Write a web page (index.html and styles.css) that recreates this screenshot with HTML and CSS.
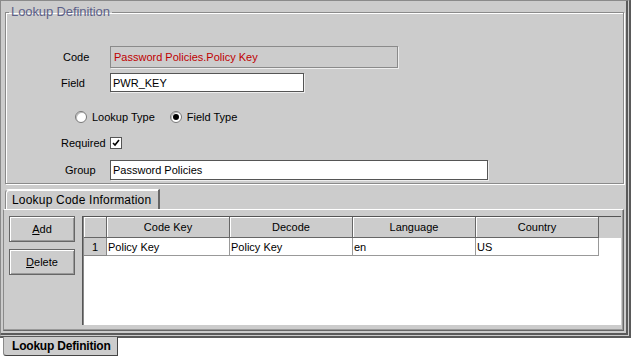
FILE: index.html
```html
<!DOCTYPE html>
<html lang="en">
<head>
  <meta charset="UTF-8">
  <title>Lookup Definition</title>
  <link rel="stylesheet" href="styles.css">
</head>
<body>
  <div class="frame">
    <fieldset class="def">
      <legend>Lookup Definition</legend>
      <div class="row r-code">
        <label class="lbl lbl-code">Code</label>
        <div class="input ro w-code">Password Policies.Policy Key</div>
      </div>
      <div class="row r-field">
        <label class="lbl">Field</label>
        <div class="input w-field">PWR_KEY</div>
      </div>
      <div class="row r-radio">
        <span class="opt"><span class="radio"></span>Lookup Type</span>
        <span class="opt"><span class="radio on"></span>Field Type</span>
      </div>
      <div class="row r-req">
        <label class="lbl">Required</label>
        <span class="check">
          <svg width="8" height="8" viewBox="0 0 8 8"><path d="M1 4 L3 6 L7 1" fill="none" stroke="#000" stroke-width="1.6"/></svg>
        </span>
      </div>
      <div class="row r-group">
        <label class="lbl lbl-group">Group</label>
        <div class="input w-group">Password Policies</div>
      </div>
    </fieldset>

    <div class="tabs">
      <div class="tab">Lookup Code Information</div>
    </div>
    <div class="panel">
      <div class="buttons">
        <button class="btn"><u>A</u>dd</button>
        <button class="btn"><u>D</u>elete</button>
      </div>
      <div class="grid">
        <table>
          <colgroup>
            <col class="c-num"><col class="c-data"><col class="c-data"><col class="c-data"><col class="c-data"><col>
          </colgroup>
          <thead>
            <tr>
              <th></th>
              <th>Code Key</th>
              <th>Decode</th>
              <th>Language</th>
              <th>Country</th>
              <th class="filler"></th>
            </tr>
          </thead>
          <tbody>
            <tr>
              <td class="num">1</td>
              <td>Policy Key</td>
              <td>Policy Key</td>
              <td>en</td>
              <td>US</td>
              <td class="filler"></td>
            </tr>
          </tbody>
        </table>
      </div>
    </div>
  </div>
  <div class="bottom-tab">Lookup Definition</div>
</body>
</html>
```

FILE: styles.css
```css
body { margin: 0; background: #fff; font-family: "Liberation Sans", Arial, sans-serif; font-size: 11px; color: #000; }

.frame { width: 631px; height: 338px; box-sizing: border-box; background: #cccccc; border-top: 1px solid #8a8a8a; border-left: 1px solid #8a8a8a; border-right: 5px double #5a5a5a; border-bottom: 5px double #5a5a5a; display: flex; flex-direction: column; }

.def { margin: 3px 2px 0 4px; padding: 0 0 3px 0; border: 1px solid #8a8a8a; box-shadow: inset 1px 1px #fff, 1px 1px #fff; min-width: 0; }
.def legend { font-size: 13px; color: #5c6088; padding: 0 2px; margin-left: 3px; line-height: 16px; letter-spacing: -0.1px; }

.row { display: flex; align-items: center; }
.lbl { width: 49px; margin-left: 55px; }
.lbl-code { margin-left: 57px; width: 47px; }
.lbl-group { margin-left: 59px; width: 45px; }

.r-code { margin-top: 26px; height: 22px; }
.r-field { margin-top: 5px; height: 19px; }
.r-radio { margin-top: 16px; height: 17px; padding-left: 69px; gap: 15px; }
.r-req { margin-top: 10px; height: 16px; }
.r-group { margin-top: 9px; height: 20px; }

.input { box-sizing: border-box; height: 100%; background: #fff; border: 1px solid #555; box-shadow: 1px 1px #eee; padding-left: 2px; display: flex; align-items: center; }
.ro { background: #cccccc; color: #c00000; border-color: #8a8a8a; padding-left: 3px; }
.w-code { width: 288px; }
.w-field { width: 194px; }
.w-group { width: 378px; }

.opt { display: flex; align-items: center; gap: 5px; }
.radio { width: 10px; height: 10px; border-radius: 50%; border: 1px solid #777; background: #fff; box-shadow: inset 1px 1px #bbb; display: flex; align-items: center; justify-content: center; }
.radio.on::after { content: ""; width: 6px; height: 6px; border-radius: 50%; background: #000; }

.check { width: 10px; height: 10px; border: 1px solid #555; background: #fff; display: flex; align-items: center; justify-content: center; }

.tabs { display: flex; margin: 5px 0 0 4px; }
.tab { height: 20px; box-sizing: border-box; padding: 2px 7px 0 6px; font-size: 12px; line-height: 16px; letter-spacing: 0.2px; border-top: 1px solid #fff; border-left: 1px solid #8a8a8a; border-right: 2px solid #666; border-top-left-radius: 4px; box-shadow: inset 1px 1px #fff; }

.panel { flex: 1; display: flex; margin: 0 2px 2px 2px; padding: 6px 2px 5px 5px; border-top: 1px solid #fff; border-left: 1px solid #8a8a8a; border-right: 1px solid #666; border-bottom: 1px solid #666; box-shadow: inset -1px -1px #999; }

.buttons { display: flex; flex-direction: column; gap: 7px; width: 66px; margin-right: 7px; }
.btn { height: 26px; padding: 0; background: #cccccc; border: 1px solid #666; box-shadow: inset 1px 1px #fff, inset -1px -1px #999; font: 11px "Liberation Sans", Arial, sans-serif; color: #000; }

.grid { flex: 1; background: #fff; border-top: 1px solid #555; border-left: 1px solid #555; padding-left: 1px; box-shadow: inset 1px 0 #888; overflow: hidden; }
.grid table { border-collapse: separate; border-spacing: 0; table-layout: fixed; width: 100%; }
.c-num { width: 23px; }
.c-data { width: 123px; }
.grid th { height: 21px; box-sizing: border-box; padding: 0; font-weight: normal; background: #cccccc; border-right: 1px solid #666; border-bottom: 1px solid #666; box-shadow: inset 1px 1px #fff; }
.grid th.filler { border: none; box-shadow: none; }
.grid td { height: 18px; box-sizing: border-box; padding: 0 1px; border-right: 1px solid #999; border-bottom: 1px solid #999; white-space: nowrap; }
.grid td.num { background: #cccccc; text-align: center; border-color: #888; }
.grid td.filler { border: none; }

.bottom-tab { width: 115px; height: 19px; box-sizing: border-box; margin: -1px 0 0 3px; padding: 2px 0 0 8px; background: #cccccc; border-left: 1px solid #8a8a8a; border-right: 1px solid #444; border-bottom: 1px solid #444; border-bottom-left-radius: 3px; font-size: 12px; font-weight: bold; letter-spacing: -0.2px; line-height: 15px; }
```
